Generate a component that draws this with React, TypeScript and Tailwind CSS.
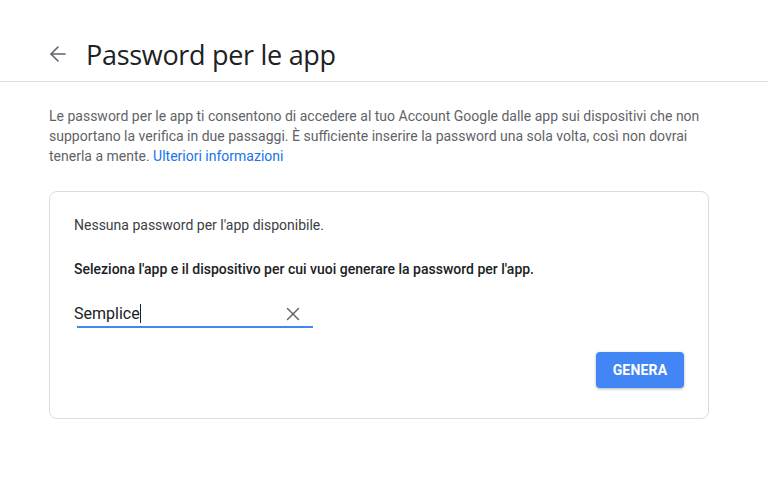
import { X, ArrowLeft } from 'lucide-react';

export default function App() {
  return (
    <div className="min-h-screen bg-white font-['Roboto',sans-serif] text-[#202124]">
      {/* HEADER */}
      <div className="h-[82px] border-b border-[#dadce0] flex items-center pt-[27px] pl-[46px]">
        <ArrowLeft className="w-6 h-6 text-[#5f6368]" strokeWidth={1.6} />
        <h1 className="ml-[16px] text-[27px] leading-none tracking-[-0.3px] font-['Open_Sans',sans-serif] text-[#202124]">
          Password per le app
        </h1>
      </div>

      <div className="w-[660px] ml-[49px]">
        {/* DESCRIZIONE */}
        <p className="mt-[24px] text-[14px] leading-[20px] text-[#5f6368]">
          Le password per le app ti consentono di accedere al tuo Account Google dalle app sui dispositivi che non
          supportano la verifica in due passaggi. È sufficiente inserire la password una sola volta, così non dovrai
          tenerla a mente. <a className="text-[#1a73e8]">Ulteriori informazioni</a>
        </p>

        {/* CARD */}
        <div className="mt-[25px] border border-[#dadce0] rounded-lg pt-[23px] pl-[24px] pr-[24px] pb-[30px]">
          <p className="text-[14px] leading-[20px] text-[#3c4043]">
            Nessuna password per l'app disponibile.
          </p>
          <p className="mt-[24px] text-[14px] leading-[20px] font-medium text-[#202124]">
            Seleziona l'app e il dispositivo per cui vuoi generare la password per l'app.
          </p>

          {/* INPUT */}
          <div className="mt-[22px] w-[239px]">
            <div className="flex items-center h-[25px]">
              <span className="text-[16px] leading-[20px] text-[#202124]">Semplice</span>
              <span className="w-px h-[19px] bg-[#202124]" />
              <X className="ml-auto mr-[9px] w-[22px] h-[22px] text-[#5f6368]" strokeWidth={1.5} />
            </div>
            <div className="ml-[3px] h-[2px] bg-[#4285f4]" />
          </div>

          <div className="flex justify-end mt-[24px]">
            <button className="w-[88px] h-[36px] rounded bg-[#4285f4] text-white text-[14px] font-bold tracking-[0.2px] shadow-[0_1px_3px_rgba(0,0,0,0.3)]">
              GENERA
            </button>
          </div>
        </div>
      </div>
    </div>
  );
}
